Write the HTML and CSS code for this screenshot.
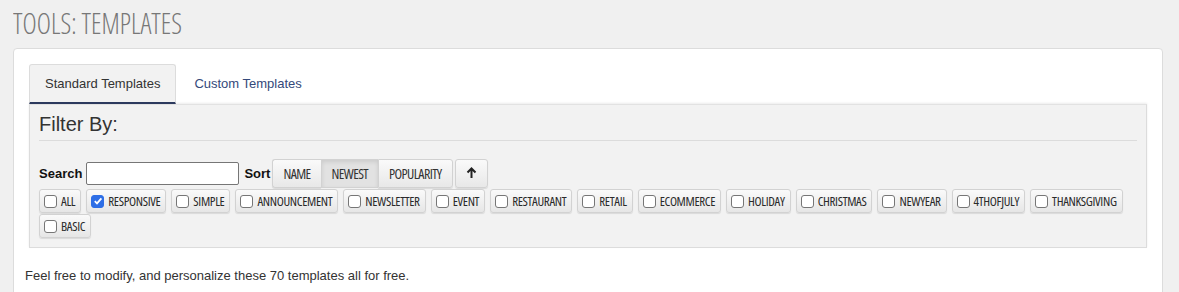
FILE: index.html
```html
<!DOCTYPE html>
<html lang="en">
<head>
  <meta charset="UTF-8">
  <title>Tools: Templates</title>
  <link rel="stylesheet" href="styles.css">
</head>
<body>

<h1 class="page-title"><span>TOOLS: TEMPLATES</span></h1>

<div class="card">
  <!-- Tabs -->
  <ul class="tabs">
    <li class="tab active">Standard Templates</li>
    <li class="tab">Custom Templates</li>
  </ul>

  <div class="tab-panel">
    <h2 class="filter-title">Filter By:</h2>

    <div class="search-row">
      <label class="lbl">Search</label>
      <input type="text" class="search-input">
      <label class="lbl">Sort</label>
      <div class="btn-group">
        <button class="btn">NAME</button>
        <button class="btn active">NEWEST</button>
        <button class="btn">POPULARITY</button>
      </div>
      <button class="btn arrow-btn">
        <svg width="11" height="12" viewBox="0 0 11 12"><path d="M5.5 11V2M1.5 5.5L5.5 1.5L9.5 5.5" fill="none" stroke="#222" stroke-width="2"/></svg>
      </button>
    </div>

    <div class="tag-list">
      <label class="tag"><span class="box"></span>ALL</label>
      <label class="tag"><span class="box checked"><svg width="10" height="10" viewBox="0 0 10 10"><path d="M1.8 5.2L4 7.4L8.4 2.4" fill="none" stroke="#fff" stroke-width="1.8"/></svg></span>RESPONSIVE</label>
      <label class="tag"><span class="box"></span>SIMPLE</label>
      <label class="tag"><span class="box"></span>ANNOUNCEMENT</label>
      <label class="tag"><span class="box"></span>NEWSLETTER</label>
      <label class="tag"><span class="box"></span>EVENT</label>
      <label class="tag"><span class="box"></span>RESTAURANT</label>
      <label class="tag"><span class="box"></span>RETAIL</label>
      <label class="tag"><span class="box"></span>ECOMMERCE</label>
      <label class="tag"><span class="box"></span>HOLIDAY</label>
      <label class="tag"><span class="box"></span>CHRISTMAS</label>
      <label class="tag"><span class="box"></span>NEWYEAR</label>
      <label class="tag"><span class="box"></span>4THOFJULY</label>
      <label class="tag"><span class="box"></span>THANKSGIVING</label>
      <label class="tag"><span class="box"></span>BASIC</label>
    </div>
  </div>

  <p class="intro">Feel free to modify, and personalize these 70 templates all for free.</p>
</div>

</body>
</html>
```

FILE: styles.css
```css
* {
  margin: 0; padding: 0; box-sizing: border-box;
}
body {
  font-family: "Liberation Sans", Arial, sans-serif;
  font-size: 13px;
  color: #333;
  background-color: #f0f0f0;
}

/* Titulo */
.page-title {
  height: 48px;
  padding: 6px 0 0 13px;
  font-family: "Open Sans", sans-serif;
  font-stretch: 75%;
  font-weight: 300;
  font-size: 29px;
  line-height: 34px;
  color: #777;
}
.page-title span {
  display: inline-block;
  transform: scaleX(0.93);
  transform-origin: left center;
}

/* Card */
.card {
  margin: 0 16px 0 13px;
  background: #fff;
  border: 1px solid #dcdcdc;
  border-radius: 4px;
  padding: 15px 15px 20px 15px;
}

.tabs {
  list-style: none;
  display: flex;
  height: 40px;
}
.tab {
  padding: 0 16px 0 17px;
  line-height: 38px;
  color: #34497a;
  border: 1px solid transparent;
  border-bottom: 0;
}
.tab.active {
  padding: 0 15px;
  background: #f2f2f2;
  color: #333;
  border-color: #dcdcdc;
  border-radius: 3px 3px 0 0;
  border-bottom: 2px solid #2c3a5e;
  line-height: 37px;
}

.tab-panel {
  background: #f2f2f2;
  border: 1px solid #dcdcdc;
  border-top-color: #e2e2e2;
  box-shadow: 0 -1px 2px rgba(0,0,0,0.08);
  padding: 8px 9px 9px 9px;
}

.filter-title {
  font-weight: normal;
  font-size: 20px;
  line-height: 22px;
  color: #333;
  padding-bottom: 5px;
  border-bottom: 1px solid #dcdcdc;
  margin-bottom: 17px;
}

.search-row {
  display: flex;
  align-items: center;
  gap: 4px;
  height: 30px;
}
.lbl {
  font-weight: bold;
  color: #111;
}
.search-input {
  width: 153px;
  height: 23px;
  border: 1px solid #767676;
  border-radius: 2px;
  margin-right: 1px;
}

.btn {
  font-family: "Open Sans", sans-serif;
  font-stretch: 75%;
  font-weight: 500;
  font-size: 14px;
  letter-spacing: -0.6px;
  color: #333;
  border: 1px solid #d2d2d2;
  border-radius: 3px;
  background: linear-gradient(#fafafa, #e8e8e8);
  box-shadow: 0 1px 1px rgba(0,0,0,0.1);
  cursor: pointer;
}

.btn-group {
  display: flex;
  height: 29px;
  margin-left: -2px;
}
.btn-group .btn {
  padding: 0 10px;
  border-radius: 0;
  border-right: 0;
}
.btn-group .btn:first-child { border-radius: 3px 0 0 3px; }
.btn-group .btn:last-child { border-radius: 0 3px 3px 0; border-right: 1px solid #d2d2d2; }
.btn-group .btn.active {
  background: #e2e2e2;
  box-shadow: inset 0 2px 4px rgba(0,0,0,0.1);
}
.arrow-btn {
  width: 33px;
  height: 29px;
  margin-left: -2px;
  display: flex;
  align-items: center;
  justify-content: center;
}

/* Tags */
.tag-list {
  display: flex;
  flex-wrap: wrap;
  column-gap: 5px;
  row-gap: 1px;
  margin-top: 1px;
}
.tag {
  display: flex;
  align-items: center;
  height: 24px;
  padding: 0 5px 0 4px;
  font-family: "Open Sans", sans-serif;
  font-stretch: 75%;
  font-weight: 500;
  font-size: 13px;
  letter-spacing: -0.35px;
  color: #2a2a2a;
  border: 1px solid #d2d2d2;
  border-radius: 3px;
  background: linear-gradient(#fafafa, #e6e6e6);
  box-shadow: 0 1px 1px rgba(0,0,0,0.1);
}
.box {
  width: 13px;
  height: 13px;
  border: 1px solid #767676;
  border-radius: 3px;
  background: #fff;
  margin-right: 4px;
  display: flex;
  align-items: center;
  justify-content: center;
}
.box.checked {
  background: #2e6ee6;
  border-color: #2e6ee6;
}

.intro {
  margin: 20px 0 0 -4px;
  line-height: 16px;
}
```
